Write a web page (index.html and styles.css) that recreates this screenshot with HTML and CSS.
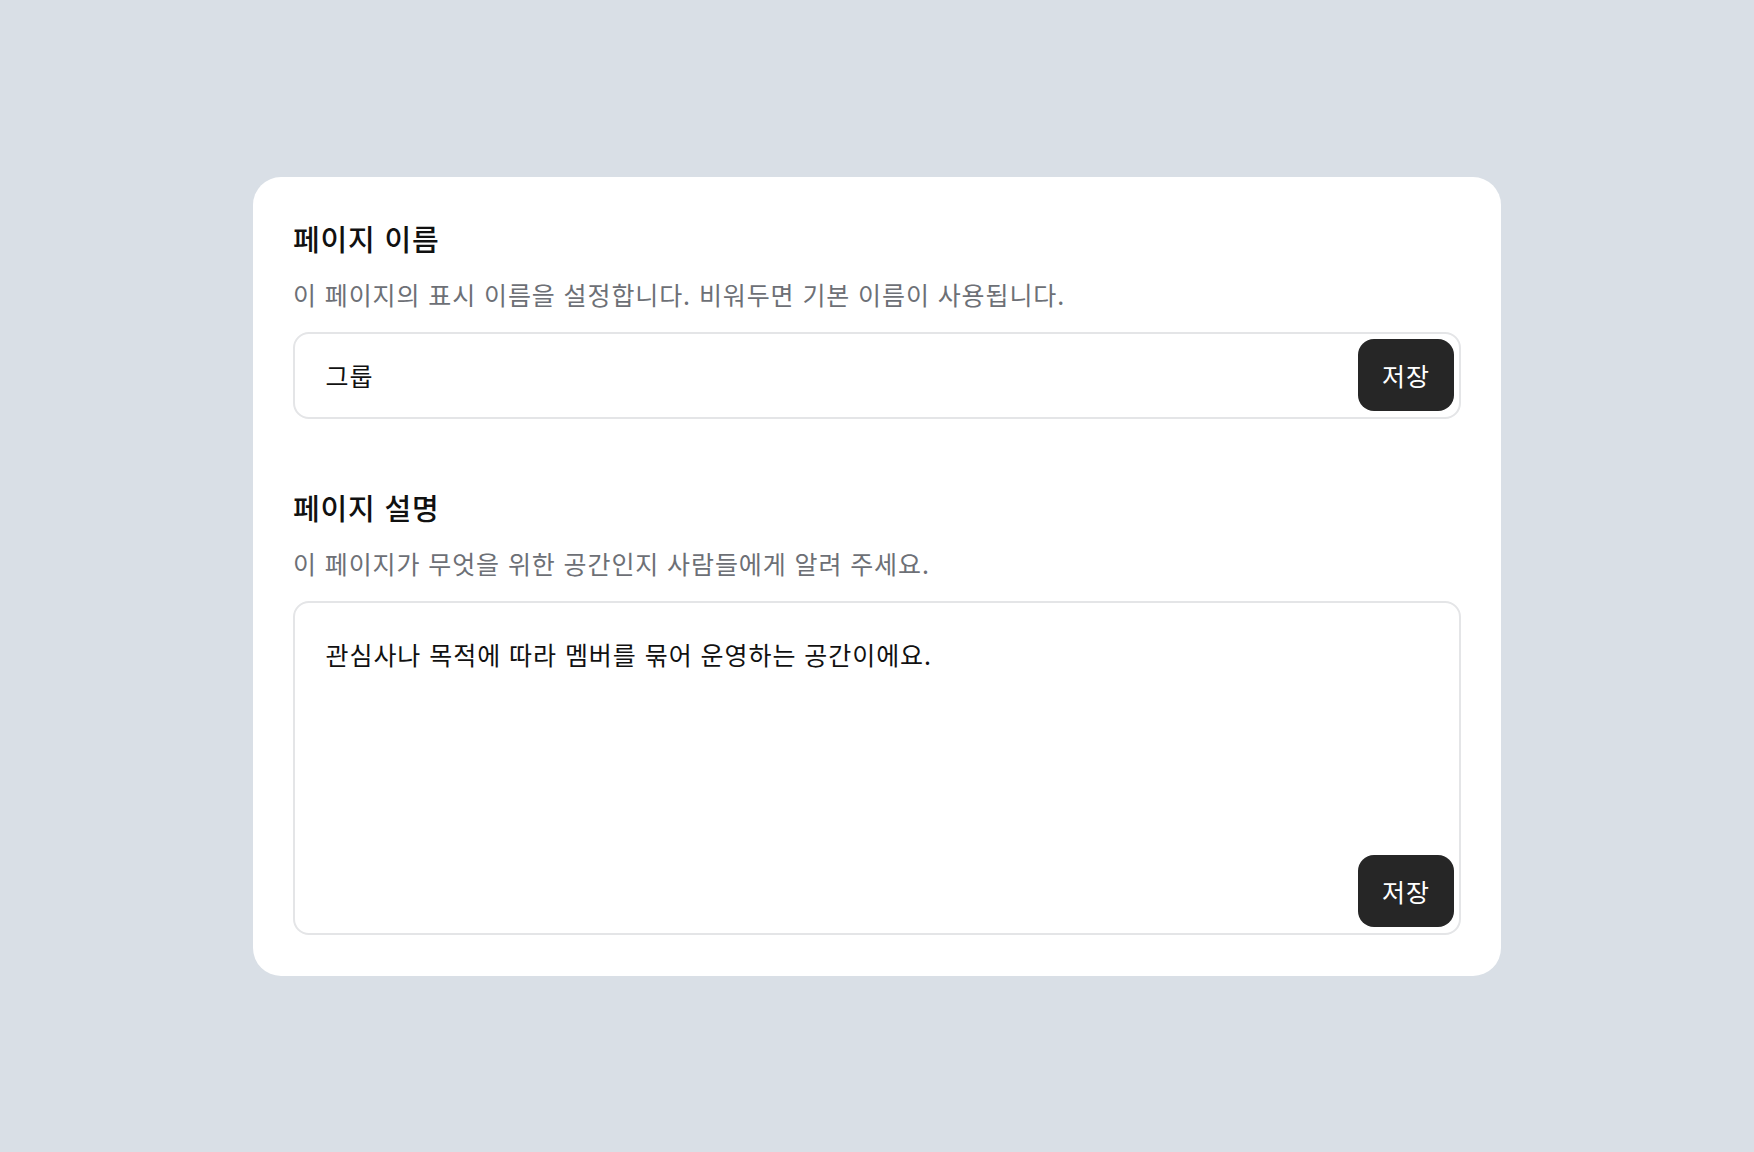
FILE: index.html
```html
<!DOCTYPE html>
<html lang="ko">
<head>
<meta charset="utf-8">
<title>페이지 설정</title>
<link rel="stylesheet" href="styles.css">
</head>
<body>
  <main class="card">
    <section class="section">
      <h2 class="title">페이지 이름</h2>
      <p class="desc">이 페이지의 표시 이름을 설정합니다. 비워두면 기본 이름이 사용됩니다.</p>
      <div class="field">
        <div class="field-value">그룹</div>
        <button class="save-btn" type="button">저장</button>
      </div>
    </section>
    <section class="section section-second">
      <h2 class="title">페이지 설명</h2>
      <p class="desc">이 페이지가 무엇을 위한 공간인지 사람들에게 알려 주세요.</p>
      <div class="area">
        <div class="area-text">관심사나 목적에 따라 멤버를 묶어 운영하는 공간이에요.</div>
        <div class="area-actions">
          <button class="save-btn" type="button">저장</button>
        </div>
      </div>
    </section>
  </main>
</body>
</html>
```

FILE: styles.css
```css
* {
  box-sizing: border-box;
}

html, body {
  margin: 0;
  padding: 0;
}

body {
  min-height: 100vh;
  background: #d9dfe6;
  display: flex;
  align-items: center;
  justify-content: center;
  font-family: "Noto Sans CJK KR", "Noto Sans", sans-serif;
  color: #111111;
}

.card {
  width: 1248px;
  background: #ffffff;
  border-radius: 28px;
  padding: 39px 40px 41px;
  display: flex;
  flex-direction: column;
}

.section {
  display: flex;
  flex-direction: column;
}

.section-second {
  margin-top: 66px;
}

.title {
  margin: 0;
  font-size: 29px;
  line-height: 44px;
  font-weight: 500;
  letter-spacing: 0.85px;
  color: #111111;
}

.desc {
  margin: 16px 0 20px;
  font-size: 25px;
  line-height: 36px;
  font-weight: 400;
  letter-spacing: 0.9px;
  color: #6d7076;
}

.field {
  display: flex;
  align-items: center;
  border: 2px solid #e4e5e7;
  border-radius: 16px;
  padding: 5.5px;
  height: 87px;
}

.field-value {
  flex: 1;
  padding-left: 25px;
  font-size: 25px;
  line-height: 36px;
  font-weight: 400;
  letter-spacing: 0.9px;
  color: #111111;
}

.save-btn {
  width: 96px;
  height: 72px;
  flex: none;
  border: none;
  border-radius: 16px;
  background: #262626;
  color: #ffffff;
  font-family: "Noto Sans CJK KR", "Noto Sans", sans-serif;
  font-size: 25px;
  font-weight: 400;
  line-height: 36px;
  letter-spacing: 0.8px;
  text-indent: 0.8px;
  padding: 0;
  cursor: pointer;
}

.area {
  display: flex;
  flex-direction: column;
  height: 334px;
  border: 2px solid #e4e5e7;
  border-radius: 16px;
  padding: 5.5px;
}

.area-text {
  flex: 1;
  padding: 27.5px 25px 0;
  font-size: 25px;
  line-height: 36px;
  font-weight: 400;
  letter-spacing: 0.95px;
  color: #111111;
}

.area-actions {
  display: flex;
  justify-content: flex-end;
}
```
